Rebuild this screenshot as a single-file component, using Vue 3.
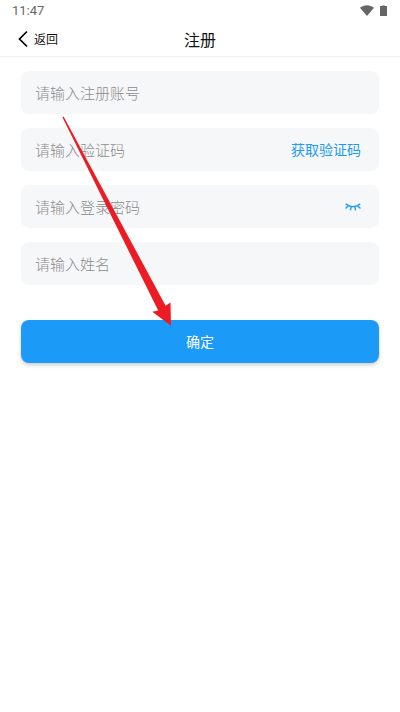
<script setup>
import { ref } from 'vue'

const account = ref('')
const code = ref('')
const password = ref('')
const name = ref('')
const showPassword = ref(false)
</script>

<template>
  <div class="page">
    <div class="status">
      <span>11:47</span>
      <div class="status-icons">
        <svg width="14" height="12" viewBox="0 0 14 12" aria-hidden="true">
          <path d="M0 2.8C4 -0.7 10 -0.7 14 2.8L7 11Z" fill="#666" />
        </svg>
        <svg width="7" height="12" viewBox="0 0 7 12" aria-hidden="true">
          <path d="M2 0H5V1H2Z" fill="#bbb" />
          <path d="M0 1H7V11H0Z" fill="#666" />
        </svg>
      </div>
    </div>

    <header class="bar">
      <a class="back" href="#">
        <svg width="10" height="18" viewBox="0 0 10 18" aria-hidden="true">
          <path d="M9 1.5L1.5 9L9 16.5" fill="none" stroke="#000" stroke-width="1.7" />
        </svg>
        <span>返回</span>
      </a>
      <h1>注册</h1>
    </header>

    <form class="form" @submit.prevent>
      <div class="field">
        <input v-model="account" type="text" placeholder="请输入注册账号" aria-label="注册账号" />
      </div>
      <div class="field">
        <input v-model="code" type="text" placeholder="请输入验证码" aria-label="验证码" />
        <button class="send" type="button">获取验证码</button>
      </div>
      <div class="field">
        <input
          v-model="password"
          :type="showPassword ? 'text' : 'password'"
          placeholder="请输入登录密码"
          aria-label="登录密码"
        />
        <button class="eye" type="button" aria-label="显示密码" @click="showPassword = !showPassword">
          <svg width="16" height="8" viewBox="0 0 16 8" aria-hidden="true">
            <path
              d="M0.8 0.8C4.5 4.6 11.5 4.6 15.2 0.8M3.2 2.8L0.6 5.4M12.8 2.8L15.4 5.4M6.2 3.8L5.4 7.4M9.8 3.8L10.6 7.4"
              fill="none"
              stroke="#1c9af8"
              stroke-width="1.4"
            />
          </svg>
        </button>
      </div>
      <div class="field">
        <input v-model="name" type="text" placeholder="请输入姓名" aria-label="姓名" />
      </div>
      <button class="submit" type="submit">确定</button>
    </form>

    <svg class="pointer" width="110" height="212" viewBox="0 0 110 212" aria-hidden="true">
      <path
        d="M0.4 1.2L1.6 0.4L103.6 189.8L108.5 186.5L109 209.8L90.3 195.8L96.2 194.6Z"
        fill="#ed1c24"
      />
    </svg>
  </div>
</template>

<style>
body {
  background: #fff;
}
</style>

<style scoped>
.page {
  position: relative;
  font-family: "Noto Sans CJK SC", sans-serif;
  color: #111;
}
.status {
  display: flex;
  justify-content: space-between;
  align-items: center;
  height: 22px;
  padding: 0 13px 0 12px;
  font: 13px/22px Roboto, sans-serif;
  color: #666;
}
.status-icons {
  display: flex;
  gap: 6px;
}
.bar {
  display: grid;
  grid-template-columns: 1fr auto 1fr;
  align-items: center;
  height: 34px;
  padding: 0 18px;
  border-bottom: 1px solid #f0f0f0;
}
.back {
  display: flex;
  align-items: center;
  gap: 6px;
  font-size: 12px;
  line-height: 18px;
  color: inherit;
  text-decoration: none;
}
h1 {
  margin: 0;
  font-size: 16px;
  font-weight: 400;
  line-height: 24px;
}
.form {
  display: flex;
  flex-direction: column;
  gap: 14px;
  padding: 14px 21px;
}
.field {
  display: flex;
  align-items: center;
  height: 43px;
  padding: 0 18px 0 14px;
  border-radius: 8px;
  background: #f5f7f9;
}
input {
  flex: 1;
  min-width: 0;
  padding: 0;
  border: 0;
  outline: 0;
  background: none;
  font: 300 15px/23px "Noto Sans CJK SC", sans-serif;
  color: #333;
}
input::placeholder {
  color: #8c8c8c;
  opacity: 1;
}
button {
  padding: 0;
  border: 0;
  background: none;
  font-family: inherit;
  font-size: 14px;
  line-height: 23px;
  cursor: pointer;
}
.send {
  color: #1c9af8;
}
.eye {
  display: flex;
}
.submit {
  height: 43px;
  margin-top: 21px;
  border-radius: 8px;
  background: #1c9af8;
  box-shadow: 0 2px 4px rgba(0, 0, 0, 0.2);
  color: #fff;
}
/* Hint arrow laid over the form, pointing at the submit button */
.pointer {
  position: absolute;
  left: 62px;
  top: 116px;
  pointer-events: none;
}
</style>
